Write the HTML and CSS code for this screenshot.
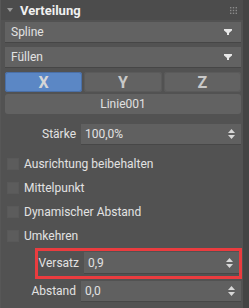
FILE: index.html
```html
<!DOCTYPE html>
<html>
<head>
<meta charset="utf-8">
<link rel="stylesheet" href="styles.css">
</head>
<body>
<div class="panel">
  <div class="header">
    <span class="tri"></span>
    <span class="title">Verteilung</span>
    <svg class="grip" width="7" height="7" viewBox="0 0 7 7"><g fill="#8a8a8a"><rect x="0" y="0" width="1.4" height="1.4"/><rect x="2.8" y="0" width="1.4" height="1.4"/><rect x="5.6" y="0" width="1.4" height="1.4"/><rect x="0" y="2.8" width="1.4" height="1.4"/><rect x="2.8" y="2.8" width="1.4" height="1.4"/><rect x="5.6" y="2.8" width="1.4" height="1.4"/><rect x="0" y="5.6" width="1.4" height="1.4"/><rect x="2.8" y="5.6" width="1.4" height="1.4"/><rect x="5.6" y="5.6" width="1.4" height="1.4"/></g></svg>
  </div>
  <div class="body">
    <div class="select"><span>Spline</span><svg class="arrow" width="8" height="6" viewBox="0 0 8 6"><path d="M0 0h8v1.5L5 4v2H3V4L0 1.5z" fill="#e8e8e8"/></svg></div>
    <div class="select"><span>Füllen</span><svg class="arrow" width="8" height="6" viewBox="0 0 8 6"><path d="M0 0h8v1.5L5 4v2H3V4L0 1.5z" fill="#e8e8e8"/></svg></div>
    <div class="axes">
      <div class="axis active">X</div>
      <div class="axis">Y</div>
      <div class="axis">Z</div>
    </div>
    <div class="button">Linie001</div>
    <div class="field first">
      <label>Stärke</label>
      <div class="spin"><span>100,0%</span><svg class="updown" width="7" height="10" viewBox="0 0 7 10"><path d="M3.5 0L7 4H0z M0 6h7L3.5 10z" fill="#d8d8d8"/></svg></div>
    </div>
    <div class="checks">
      <div class="check"><span class="box"></span><span>Ausrichtung beibehalten</span></div>
      <div class="check"><span class="box"></span><span>Mittelpunkt</span></div>
      <div class="check"><span class="box"></span><span>Dynamischer Abstand</span></div>
      <div class="check"><span class="box"></span><span>Umkehren</span></div>
    </div>
    <div class="highlight">
      <div class="field">
        <label>Versatz</label>
        <div class="spin"><span>0,9</span><svg class="updown" width="7" height="10" viewBox="0 0 7 10"><path d="M3.5 0L7 4H0z M0 6h7L3.5 10z" fill="#d8d8d8"/></svg></div>
      </div>
    </div>
    <div class="field last">
      <label>Abstand</label>
      <div class="spin"><span>0,0</span><svg class="updown" width="7" height="10" viewBox="0 0 7 10"><path d="M3.5 0L7 4H0z M0 6h7L3.5 10z" fill="#d8d8d8"/></svg></div>
    </div>
  </div>
</div>
</body>
</html>
```
FILE: styles.css
```css
html, body {
  margin: 0;
  padding: 0;
  background: #444444;
  width: 249px;
  height: 308px;
  overflow: hidden;
}
.panel {
  width: 243px;
  height: 308px;
  background: #525252;
  font-family: Roboto, "Noto Sans", sans-serif;
  font-size: 12px;
  color: #e2e2e2;
  box-sizing: border-box;
  border-left: 1px solid #575757;
}
.header {
  height: 20px;
  background: #4c4c4c;
  display: flex;
  align-items: center;
  padding-left: 6px;
}
.tri {
  width: 0;
  height: 0;
  border-left: 3px solid transparent;
  border-right: 3px solid transparent;
  border-top: 4px solid #9a9a9a;
  margin-right: 7px;
}
.title {
  font-weight: bold;
  font-size: 13px;
  color: #f0f0f0;
}
.grip {
  margin-left: auto;
  margin-right: 6px;
}
.body {
  padding: 2px 2px 0 4px;
  display: flex;
  flex-direction: column;
}
.select {
  height: 20px;
  background: #626262;
  border-bottom: 1px solid #464646;
  display: flex;
  align-items: center;
  padding: 0 6px;
  margin-bottom: 4px;
}
.select span { flex: 1; }
.arrow { margin-right: 3px; }
.axes {
  display: flex;
  gap: 2px;
  height: 20px;
}
.axis {
  flex: 1;
  background: #626262;
  border-radius: 3px;
  display: flex;
  align-items: center;
  justify-content: center;
  font-weight: bold;
  font-size: 16px;
  color: #c8c8c8;
  box-shadow: inset 0 0 0 1px #5a5a5a;
}
.axis.active {
  background: #5b87c5;
  color: #d6d6d6;
  box-shadow: inset 0 0 0 1px #4a6fa6;
}
.button {
  margin-top: 2px;
  height: 20px;
  background: #626262;
  border-radius: 3px;
  display: flex;
  align-items: center;
  justify-content: center;
  color: #e0e0e0;
}
.field {
  display: flex;
  align-items: center;
  height: 20px;
}
.field.first { margin-top: 10px; }
.field label {
  width: 76px;
  text-align: right;
  padding-right: 5px;
  box-sizing: border-box;
}
.spin {
  flex: 1;
  height: 20px;
  background: #606060;
  border-bottom: 1px solid #474747;
  display: flex;
  align-items: center;
  padding: 0 4px;
}
.spin span { flex: 1; }
.updown { margin-right: 2px; }
.checks {
  margin-top: 14px;
  display: flex;
  flex-direction: column;
  gap: 12px;
}
.check {
  display: flex;
  align-items: center;
  height: 12px;
}
.box {
  width: 12px;
  height: 12px;
  background: #5c5c5c;
  box-shadow: inset 0 0 0 1px #595959;
  margin: 0 5px 0 2px;
}
.highlight {
  margin: 6px -1px 0 30px;
  border: 3px solid #ea3c3f;
  padding: 2px 0 0 0;
  box-sizing: border-box;
  height: 31px;
}
.highlight .field label { width: 46px; }
.highlight .spin { height: 21px; }
.field.last { margin-top: 2px; height: 20px; }
```
